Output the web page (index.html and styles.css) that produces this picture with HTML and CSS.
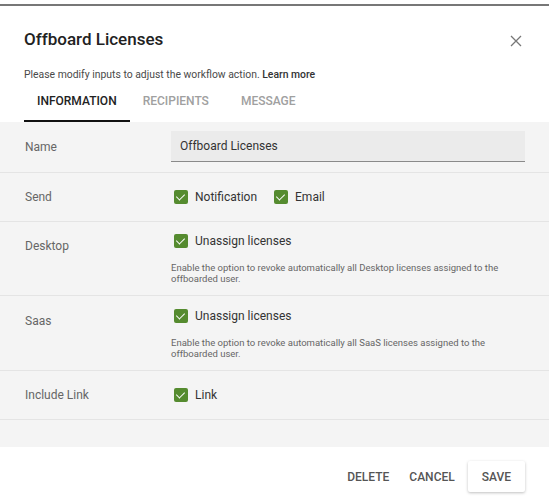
FILE: index.html
```html
<!DOCTYPE html>
<html lang="en">

<head>
    <meta charset="UTF-8">
    <meta name="viewport" content="width=device-width, initial-scale=1.0">
    <title>Offboard Licenses</title>
    <link rel="stylesheet" href="styles.css">
</head>

<body>
    <div class="dialog">
        <div class="dialog-header">
            <div class="dialog-title">Offboard Licenses</div>
            <button class="close-btn" type="button" aria-label="Close">
                <svg width="12" height="12" viewBox="0 0 12 12">
                    <path d="M1 1 L11 11 M11 1 L1 11" stroke="#777" stroke-width="1.3" fill="none" />
                </svg>
            </button>
        </div>
        <div class="dialog-subtitle">Please modify inputs to adjust the workflow action. <b>Learn more</b></div>

        <div class="tabs">
            <div class="tab active">Information</div>
            <div class="tab">Recipients</div>
            <div class="tab tab-last">Message</div>
        </div>

        <div class="content">
            <div class="row row-name">
                <div class="row-label">Name</div>
                <div class="row-value">
                    <input type="text" class="text-input" value="Offboard Licenses">
                </div>
            </div>

            <div class="row row-send">
                <div class="row-label">Send</div>
                <div class="row-value options">
                    <label class="option"><span class="check"></span>Notification</label>
                    <label class="option"><span class="check"></span>Email</label>
                </div>
            </div>

            <div class="row row-desc">
                <div class="row-label shifted">Desktop</div>
                <div class="row-value">
                    <label class="option"><span class="check"></span>Unassign licenses</label>
                    <p class="hint">Enable the option to revoke automatically all Desktop licenses assigned to the offboarded user.</p>
                </div>
            </div>

            <div class="row row-desc row-saas">
                <div class="row-label shifted">Saas</div>
                <div class="row-value">
                    <label class="option"><span class="check"></span>Unassign licenses</label>
                    <p class="hint">Enable the option to revoke automatically all SaaS licenses assigned to the offboarded user.</p>
                </div>
            </div>

            <div class="row row-send">
                <div class="row-label">Include Link</div>
                <div class="row-value options">
                    <label class="option"><span class="check"></span>Link</label>
                </div>
            </div>

            <div class="spacer"></div>
        </div>

        <div class="dialog-footer">
            <button type="button" class="text-btn">Delete</button>
            <button type="button" class="text-btn">Cancel</button>
            <button type="button" class="text-btn save-btn">Save</button>
        </div>
    </div>
</body>

</html>
```

FILE: styles.css
```css
body {
    margin: 0;
    padding: 0;
    background-color: #ffffff;
    font-family: Roboto, "Liberation Sans", Arial, sans-serif;
    color: #333333;
}

.dialog {
    width: 549px;
    margin-top: 4px;
    border-top: 2px solid #777777;
    background-color: #ffffff;
}

.dialog-header {
    display: flex;
    justify-content: space-between;
    align-items: center;
    padding: 22px 27px 0 24px;
    height: 22px;
}

.dialog-title {
    font-size: 17px;
    font-weight: 500;
    line-height: 22px;
    color: #222222;
}

.close-btn {
    border: none;
    background: none;
    padding: 0;
    margin-top: 4px;
    width: 12px;
    height: 12px;
    display: flex;
    cursor: pointer;
}

.dialog-subtitle {
    margin-top: 18px;
    padding-left: 24px;
    font-size: 10.4px;
    line-height: 14px;
    color: #4a4a4a;
}

.dialog-subtitle b {
    font-weight: 500;
    color: #333333;
}

.tabs {
    display: flex;
    padding-left: 24px;
    height: 40px;
}

.tab {
    padding: 0 13px;
    font-size: 12px;
    font-weight: 500;
    line-height: 38px;
    text-transform: uppercase;
    color: #a0a0a0;
    border-bottom: 2px solid transparent;
}

.tab.active {
    color: #222222;
    border-bottom-color: #111111;
}

.tab-last {
    margin-left: 6px;
}

.content {
    background-color: #f4f4f4;
}

.row {
    display: grid;
    grid-template-columns: 146px 1fr;
    padding: 0 24px 0 25px;
    border-bottom: 1px solid #e4e4e4;
    box-sizing: border-box;
}

.row-label {
    font-size: 12px;
    line-height: 16px;
    color: #666666;
}

.row-name {
    height: 51px;
    padding-top: 9px;
}

.row-name .row-label {
    padding-top: 8px;
}

.text-input {
    width: 100%;
    height: 31px;
    box-sizing: border-box;
    border: none;
    border-bottom: 1px solid #8a8a8a;
    background-color: #ebebeb;
    padding: 0 9px;
    font-family: inherit;
    font-size: 12px;
    color: #333333;
    outline: none;
}

.row-send {
    height: 49px;
    padding-top: 16px;
}

.row-desc {
    height: 74px;
    padding-top: 11px;
}

.row-saas {
    height: 75px;
    padding-top: 12px;
}

.row-label.shifted {
    padding-top: 5px;
}

.options {
    display: flex;
    gap: 14px;
}

.option {
    display: flex;
    align-items: center;
    height: 16px;
    font-size: 12px;
    color: #333333;
    padding-left: 3px;
}

.check {
    width: 14px;
    height: 14px;
    margin-right: 7px;
    border-radius: 2px;
    background-color: #558b2f;
    position: relative;
    flex-shrink: 0;
}

.check::after {
    content: "";
    position: absolute;
    left: 4px;
    top: 2px;
    width: 4px;
    height: 7px;
    border: solid #ffffff;
    border-width: 0 1.6px 1.6px 0;
    transform: rotate(45deg);
}

.hint {
    margin: 13px 0 0;
    font-size: 9.5px;
    line-height: 11px;
    color: #666666;
}

.spacer {
    height: 27px;
}

.dialog-footer {
    display: flex;
    justify-content: flex-end;
    padding: 14px 24px 0 0;
    height: 40px;
}

.text-btn {
    border: none;
    background: none;
    padding: 0 10px;
    height: 31px;
    font-family: inherit;
    font-size: 12px;
    font-weight: 500;
    text-transform: uppercase;
    color: #555555;
    cursor: pointer;
}

.save-btn {
    margin-left: 3px;
    padding: 0 14px;
    background-color: #ffffff;
    border-radius: 2px;
    box-shadow: 0 1px 3px rgba(0, 0, 0, 0.25);
}
```
